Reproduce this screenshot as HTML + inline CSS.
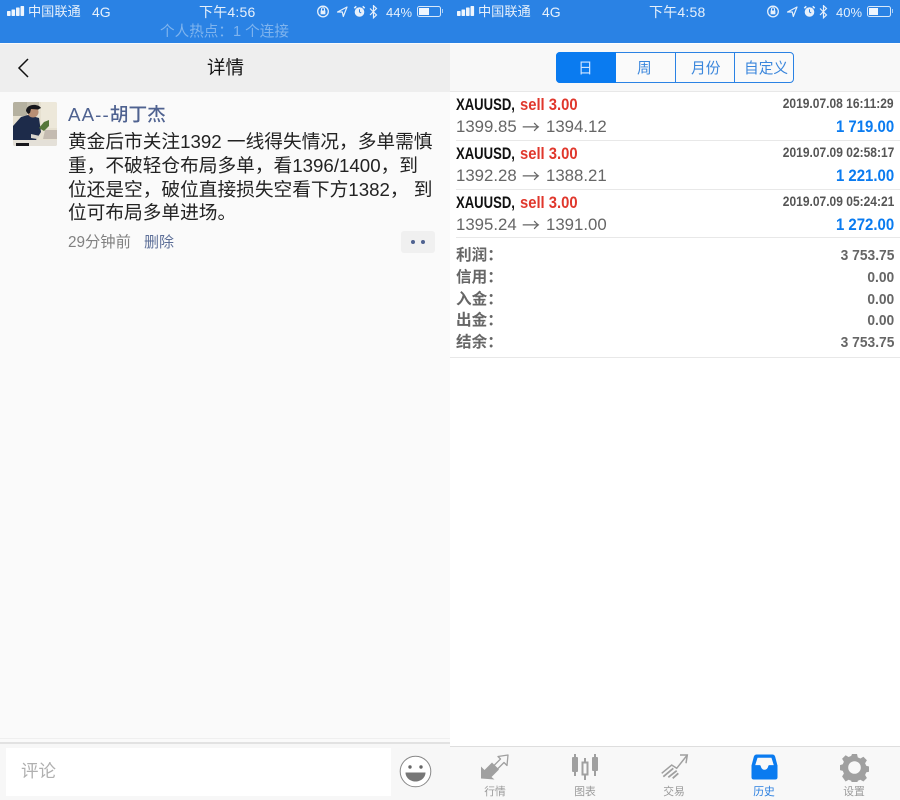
<!DOCTYPE html>
<html lang="zh-CN">
<head>
<meta charset="utf-8">
<title>详情</title>
<style>
html,body{margin:0;padding:0;width:900px;height:800px;overflow:hidden;background:#fff;font-family:"Liberation Sans","Noto Sans CJK SC",sans-serif}
#root{position:relative;width:900px;height:800px;overflow:hidden}
.a{position:absolute}
.t{position:absolute;white-space:nowrap;line-height:1}
.r{text-align:right}
.s{font-size:13.2px;color:#e6f0fb}
.b{font-size:18.7px;color:#222}
.x{font-size:17px;font-weight:bold;color:#111;transform-origin:0 50%;transform:scaleX(.77)}
.e{font-size:17px;font-weight:bold;color:#e0372c;transform-origin:0 50%;transform:scaleX(.87)}
.d{font-size:13.5px;font-weight:bold;color:#555;transform-origin:100% 50%;transform:scaleX(.89)}
.p{font-size:16.8px;color:#666}
.w{font-size:18px;color:#666;font-family:"Noto Sans CJK SC",sans-serif}
.m{font-size:17px;font-weight:bold;color:#0a7bf0;transform-origin:100% 50%;transform:scaleX(.88)}
.l{font-size:15.6px;font-weight:bold;color:#666}
.l span{font-family:"Noto Sans CJK TC",sans-serif}
.v{font-size:15px;font-weight:bold;color:#666;transform-origin:100% 50%;transform:scaleX(.92)}
.n{font-size:10.8px;color:#9a9a9a;width:60px;text-align:center}
.line{position:absolute;height:1px;background:#e8e8e8}
</style>
</head>
<body>
<div id="root">
  <!-- LEFT PANEL -->
  <div class="a" style="left:0;top:0;width:450px;height:800px;background:#fafafa"></div>
  <div class="a" style="left:0;top:0;width:450px;height:43px;background:#2a82e4"></div>
  <div class="a" style="left:0;top:44px;width:450px;height:48px;background:#eeeeee"></div>

  <svg class="a" style="left:6px;top:6px" width="20" height="12" fill="#eef5fd"><rect x="1" y="5" width="3.600" height="5" rx=".7"/><rect x="5.500" y="3.500" width="3.600" height="6.500" rx=".7"/><rect x="10" y="1.500" width="3.600" height="8.500" rx=".7"/><rect x="14.500" y="0" width="3.600" height="10" rx=".7"/></svg>
  <div class="t s" style="left:28px;top:5px">中国联通</div>
  <div class="t s" style="left:92px;top:5px;font-size:14px">4G</div>
  <div class="t s" style="left:199px;top:4.500px;font-size:14px;letter-spacing:.2px">下午4:56</div>

  <svg class="a" style="left:317px;top:5px" width="66" height="14" fill="none" stroke="#e6f0fb">
    <circle cx="6" cy="6.500" r="5.300" stroke-width="1.300"/><rect x="3.600" y="5.500" width="4.800" height="3.800" fill="#e6f0fb" stroke="none"/><path d="M4.500 5.500V4.300a1.500 1.500 0 0 1 3 0v1.200" stroke-width="1"/>
    <path d="M20.500 7l9.500-5-3.700 9.500-1-4.500z" stroke-width="1.200" stroke-linejoin="round"/>
    <circle cx="42.500" cy="7" r="4.800" fill="#e6f0fb" stroke="none"/><path d="M42.500 4.200V7l1.700 1" stroke="#2a82e4" stroke-width="1"/><path d="M37.300 3.200l2-1.900M47.700 3.200l-2-1.900" stroke-width="1.500"/>
    <path d="M53 3.500l6.500 6.500-3 2.800V.7l3 2.800-6.500 6.500" stroke-width="1.200"/>
  </svg>
  <div class="t s" style="left:386px;top:5.500px;font-size:13px">44%</div>
  <div class="a" style="left:417px;top:5.500px;width:24px;height:11px;border:1px solid #d8e8fa;border-radius:2.500px;box-sizing:border-box"></div>
  <div class="a" style="left:419px;top:7.500px;width:9.500px;height:7px;background:#eef5fd"></div>
  <div class="a" style="left:442px;top:9px;width:1px;height:4px;background:#a8cdf3"></div>
  <div class="t" style="left:160px;top:25px;font-size:14.600px;color:#7fb4ee">个人热点：1 个连接</div>

  <svg class="a" style="left:16px;top:57px" width="16" height="22" fill="none" stroke="#111" stroke-width="1.500"><path d="M12 2L3 11l9 9"/></svg>
  <div class="t" style="left:207px;top:59px;font-size:18.500px;color:#111">详情</div>

  <!-- avatar -->
  <svg class="a" style="left:13px;top:102px;border-radius:2px" width="44" height="44" viewBox="0 0 44 44">
    <rect width="44" height="44" fill="#e6e0d0"/>
    <rect x="0" y="0" width="14" height="14" fill="#b5b1a0"/>
    <rect x="14" y="0" width="12" height="8" fill="#c4bfae"/>
    <rect x="28" y="0" width="16" height="26" fill="#ede8da"/>
    <rect x="0" y="38" width="44" height="6" fill="#e4e0d8"/>
    <path d="M0 38V24L8 15 15 13 26 16 28 30 23 38z" fill="#1d2b4a"/>
    <circle cx="20" cy="10" r="5.500" fill="#b98f74"/>
    <path d="M13 9c0-7 12-8 15-3l-3 1.500-7-.5-1 4-2 1z" fill="#17171c"/>
    <path d="M26 26l5-6 5-2 0 6-5 5z" fill="#56773a"/>
    <path d="M30 37l2-9h12v9z" fill="#c4bbb0"/>
    <path d="M18 32l9 2-3 3-6-1z" fill="#d8d4cc"/>
    <path d="M3 41h13v3H3z" fill="#17171c"/>
  </svg>

  <div class="t" style="left:68px;top:106px;font-size:18.700px;color:#4f6290;font-weight:500"><span style="letter-spacing:1.100px">AA--</span>胡丁杰</div>
  <div class="t b" style="left:68px;top:133px">黄金后市关注1392 一线得失情况，多单需慎</div>
  <div class="t b" style="left:68px;top:157px">重，不破轻仓布局多单，看1396/1400，到</div>
  <div class="t b" style="left:68px;top:180.500px">位还是空，破位直接损失空看下方1382， 到</div>
  <div class="t b" style="left:68px;top:204px">位可布局多单进场。</div>
  <div class="t" style="left:68px;top:235px;font-size:15.300px;color:#808080">29分钟前</div>
  <div class="t" style="left:144px;top:235px;font-size:15px;color:#5d6f98">删除</div>
  <div class="a" style="left:401px;top:231px;width:34px;height:22px;background:#f0f0f0;border-radius:3px"></div>
  <div class="a" style="left:411px;top:240px;width:4px;height:4px;background:#4f6290;border-radius:50%"></div>
  <div class="a" style="left:421px;top:240px;width:4px;height:4px;background:#4f6290;border-radius:50%"></div>

  <div class="a" style="left:0;top:738px;width:450px;height:1px;background:#efefef"></div>
  <div class="a" style="left:0;top:742px;width:450px;height:2px;background:#e2e2e2"></div>
  <div class="a" style="left:0;top:744px;width:450px;height:56px;background:#f7f7f7"></div>
  <div class="a" style="left:6px;top:748px;width:385px;height:48px;background:#fff"></div>
  <div class="t" style="left:21px;top:763px;font-size:17.500px;color:#b0b0b0">评论</div>
  <svg class="a" style="left:399px;top:755px" width="33" height="33" viewBox="0 0 33 33">
    <circle cx="16.500" cy="16.500" r="15.300" fill="#fff" stroke="#888" stroke-width="1"/>
    <circle cx="11" cy="12" r="1.700" fill="#666"/><circle cx="22" cy="12" r="1.700" fill="#666"/>
    <path d="M6.500 17.500h20c0 5-4.500 9-10 9s-10-4-10-9z" fill="#777"/>
  </svg>

  <!-- RIGHT PANEL -->
  <div class="a" style="left:450px;top:0;width:450px;height:800px;background:#fff"></div>
  <div class="a" style="left:450px;top:0;width:450px;height:43px;background:#2a82e4"></div>
  <div class="a" style="left:450px;top:44px;width:450px;height:47px;background:#f8f8f8"></div>
  <div class="line" style="left:450px;top:91px;width:450px"></div>

  <svg class="a" style="left:456px;top:6px" width="20" height="12" fill="#eef5fd"><rect x="1" y="5" width="3.600" height="5" rx=".7"/><rect x="5.500" y="3.500" width="3.600" height="6.500" rx=".7"/><rect x="10" y="1.500" width="3.600" height="8.500" rx=".7"/><rect x="14.500" y="0" width="3.600" height="10" rx=".7"/></svg>
  <div class="t s" style="left:478px;top:5px">中国联通</div>
  <div class="t s" style="left:542px;top:5px;font-size:14px">4G</div>
  <div class="t s" style="left:649px;top:4.500px;font-size:14px;letter-spacing:.2px">下午4:58</div>
  <svg class="a" style="left:767px;top:5px" width="66" height="14" fill="none" stroke="#e6f0fb">
    <circle cx="6" cy="6.500" r="5.300" stroke-width="1.300"/><rect x="3.600" y="5.500" width="4.800" height="3.800" fill="#e6f0fb" stroke="none"/><path d="M4.500 5.500V4.300a1.500 1.500 0 0 1 3 0v1.200" stroke-width="1"/>
    <path d="M20.500 7l9.500-5-3.700 9.500-1-4.500z" stroke-width="1.200" stroke-linejoin="round"/>
    <circle cx="42.500" cy="7" r="4.800" fill="#e6f0fb" stroke="none"/><path d="M42.500 4.200V7l1.700 1" stroke="#2a82e4" stroke-width="1"/><path d="M37.300 3.200l2-1.900M47.700 3.200l-2-1.900" stroke-width="1.500"/>
    <path d="M53 3.500l6.500 6.500-3 2.800V.7l3 2.800-6.500 6.500" stroke-width="1.200"/>
  </svg>
  <div class="t s" style="left:836px;top:5.500px;font-size:13px">40%</div>
  <div class="a" style="left:867px;top:5.500px;width:24px;height:11px;border:1px solid #d8e8fa;border-radius:2.500px;box-sizing:border-box"></div>
  <div class="a" style="left:869px;top:7.500px;width:8.500px;height:7px;background:#eef5fd"></div>
  <div class="a" style="left:892px;top:9px;width:1px;height:4px;background:#a8cdf3"></div>

  <!-- segmented control -->
  <div class="a" style="left:556px;top:52px;width:238px;height:31px;box-sizing:border-box;border:1px solid #2a82e4;border-radius:4px;background:#fafafa"></div>
  <div class="a" style="left:556px;top:52px;width:60px;height:31px;background:#0a7bf0;border-radius:4px 0 0 4px"></div>
  <div class="a" style="left:675px;top:52px;width:1px;height:31px;background:#2a82e4"></div>
  <div class="a" style="left:734px;top:52px;width:1px;height:31px;background:#2a82e4"></div>
  <div class="t" style="left:578px;top:61.500px;font-size:14.700px;color:#cfe4ff">日</div>
  <div class="t" style="left:637px;top:61.500px;font-size:14.700px;color:#3a86dc">周</div>
  <div class="t" style="left:691px;top:61.500px;font-size:14.700px;color:#3a86dc">月份</div>
  <div class="t" style="left:744px;top:61.500px;font-size:14.700px;color:#3a86dc">自定义</div>

  <!-- rows -->
  <div class="t x" style="left:456px;top:96px">XAUUSD,</div><div class="t e" style="left:519.500px;top:96px">sell 3.00</div>
  <div class="t d r" style="right:6px;top:97px">2019.07.08 16:11:29</div>
  <div class="t p" style="left:456px;top:119px">1399.85</div><div class="t w" style="left:522px;top:118px">→</div><div class="t p" style="left:546px;top:119px">1394.12</div>
  <div class="t m r" style="right:6px;top:118px">1 719.00</div>
  <div class="line" style="left:456px;top:140px;width:444px"></div>

  <div class="t x" style="left:456px;top:145px">XAUUSD,</div><div class="t e" style="left:519.500px;top:145px">sell 3.00</div>
  <div class="t d r" style="right:6px;top:146px">2019.07.09 02:58:17</div>
  <div class="t p" style="left:456px;top:168px">1392.28</div><div class="t w" style="left:522px;top:167px">→</div><div class="t p" style="left:546px;top:168px">1388.21</div>
  <div class="t m r" style="right:6px;top:167px">1 221.00</div>
  <div class="line" style="left:456px;top:189px;width:444px"></div>

  <div class="t x" style="left:456px;top:194px">XAUUSD,</div><div class="t e" style="left:519.500px;top:194px">sell 3.00</div>
  <div class="t d r" style="right:6px;top:195px">2019.07.09 05:24:21</div>
  <div class="t p" style="left:456px;top:217px">1395.24</div><div class="t w" style="left:522px;top:216px">→</div><div class="t p" style="left:546px;top:217px">1391.00</div>
  <div class="t m r" style="right:6px;top:216px">1 272.00</div>
  <div class="line" style="left:456px;top:237px;width:444px"></div>

  <div class="t l" style="left:456px;top:247px">利润<span>：</span></div><div class="t v r" style="right:6px;top:248px">3 753.75</div>
  <div class="t l" style="left:456px;top:269px">信用<span>：</span></div><div class="t v r" style="right:6px;top:270px">0.00</div>
  <div class="t l" style="left:456px;top:291px">入金<span>：</span></div><div class="t v r" style="right:6px;top:292px">0.00</div>
  <div class="t l" style="left:456px;top:312px">出金<span>：</span></div><div class="t v r" style="right:6px;top:313px">0.00</div>
  <div class="t l" style="left:456px;top:334px">结余<span>：</span></div><div class="t v r" style="right:6px;top:335px">3 753.75</div>
  <div class="line" style="left:450px;top:357px;width:450px"></div>

  <!-- tab bar -->
  <div class="a" style="left:450px;top:746px;width:450px;height:54px;background:#f8f8f8"></div>
  <div class="a" style="left:450px;top:746px;width:450px;height:1px;background:#dedede"></div>

  <svg class="a" style="left:480px;top:754px" width="30" height="26" viewBox="0 0 30 26">
    <path d="M18 2.500L28 1l-1 10.500-3-3-6.500 6.500-3.500-3.500L20.500 5z" fill="#f8f8f8" stroke="#a0a0a0" stroke-width="1.300" stroke-linejoin="round"/>
    <path d="M1 24.500V12.500L4.500 16 12 8.500 19 15.500 11.500 23l3 2.500z" fill="#a0a0a0"/>
  </svg>
  <svg class="a" style="left:571px;top:753px" width="28" height="28" viewBox="0 0 28 28">
    <path d="M4 1v22M14 5v22M24 1v22" stroke="#a0a0a0" stroke-width="2"/>
    <rect x="1" y="4" width="6" height="15" rx="1" fill="#a0a0a0"/>
    <rect x="11.500" y="9.500" width="5" height="12" fill="#f8f8f8" stroke="#a0a0a0" stroke-width="2"/>
    <rect x="21" y="4" width="6" height="14" rx="1" fill="#a0a0a0"/>
  </svg>
  <svg class="a" style="left:660px;top:753px" width="30" height="28" viewBox="0 0 30 28" fill="none" stroke="#a0a0a0" stroke-width="1.500">
    <path d="M1.700 20.300L11.700 12l5 3.300L27.300 2"/><path d="M20 2h7.300l-1.300 8.300"/>
    <path d="M3.300 23.700l10-8.400M8.300 24.300l8.400-6.600M12.700 25.300l5.600-5" stroke-width="1.800"/>
  </svg>
  <svg class="a" style="left:751px;top:754px" width="27" height="26" viewBox="0 0 29 28">
    <path d="M6 .5h17c1.500 0 2.500 1 3 2.500l2.500 9.500V25c0 1.600-1 2.500-2.500 2.500H3C1.500 27.500.5 26.600.5 25V12.500L3 3C3.500 1.500 4.500.5 6 .5z" fill="#0a7bf0"/>
    <path d="M7 4h15l2.500 8h-4.700c-.8 0-1 .4-1.300 1.200-.5 2.300-2 3.800-4 3.800s-3.500-1.500-4-3.800c-.3-.8-.5-1.200-1.300-1.200H4.500z" fill="#f8f8f8"/>
  </svg>
  <svg class="a" style="left:840px;top:753px" width="29" height="29" viewBox="0 0 29 28">
    <path d="M12 .5h5l.8 3.400 2.600 1.100 3-1.800 3.500 3.500-1.800 3 1.100 2.600 3.300.8v5l-3.300.8-1.100 2.600 1.800 3-3.500 3.500-3-1.800-2.600 1.100-.8 2.700h-5l-.8-2.700-2.600-1.100-3 1.800L2.100 23l1.800-3-1.100-2.600-2.800-.8v-5l2.800-.8 1.100-2.600-1.800-3 3.500-3.500 3 1.800 2.600-1.100z" fill="#a0a0a0"/>
    <circle cx="14.500" cy="14" r="6.300" fill="#f8f8f8"/>
  </svg>

  <div class="t n" style="left:465px;top:787px">行情</div>
  <div class="t n" style="left:555px;top:787px">图表</div>
  <div class="t n" style="left:644px;top:787px">交易</div>
  <div class="t n" style="left:734px;top:787px;color:#2a7fe0">历史</div>
  <div class="t n" style="left:824px;top:787px">设置</div>
</div>
</body>
</html>
